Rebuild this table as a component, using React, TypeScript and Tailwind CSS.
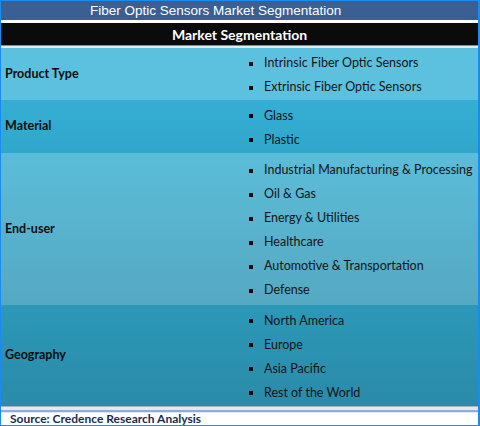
const segments = [
  {
    label: "Product Type",
    rowClass: "h-[52px] bg-[#5cc1de]",
    items: ["Intrinsic Fiber Optic Sensors", "Extrinsic Fiber Optic Sensors"],
  },
  {
    label: "Material",
    rowClass: "h-[53px] bg-gradient-to-b from-[#36aed3] to-[#30a6cb]",
    items: ["Glass", "Plastic"],
  },
  {
    label: "End-user",
    rowClass: "h-[152px] bg-gradient-to-b from-[#5bbdd9] to-[#55a8c2]",
    items: [
      "Industrial Manufacturing & Processing",
      "Oil & Gas",
      "Energy & Utilities",
      "Healthcare",
      "Automotive & Transportation",
      "Defense",
    ],
  },
  {
    label: "Geography",
    rowClass: "h-[101px] bg-gradient-to-b from-[#2c98b8] to-[#2a8ba8]",
    items: ["North America", "Europe", "Asia Pacific", "Rest of the World"],
  },
]

export default function App() {
  return (
    <div className="w-[480px] h-[426px] bg-white border-t border-l border-b border-r-2 border-[#1a8cf0] flex flex-col overflow-hidden">
      {/* Title bar */}
      <div className="h-[19px] shrink-0 bg-[#395f95] flex items-center pl-[89px] text-white text-[13.5px] leading-none font-['Liberation_Sans',Arial,sans-serif]">
        Fiber Optic Sensors Market Segmentation
      </div>
      <div className="h-[3px] shrink-0 bg-white" />

      {/* Header */}
      <div className="h-[22px] shrink-0 bg-[#0b0b0b] flex items-center justify-center text-white font-bold text-[14px] font-['Lato',sans-serif]">
        Market Segmentation
      </div>
      <div className="h-[1px] shrink-0 bg-[#8a8a8a]" />
      <div className="h-[2px] shrink-0 bg-[#d9eef5]" />

      {/* Rows */}
      {segments.map((seg) => (
        <div key={seg.label} className={`flex shrink-0 ${seg.rowClass}`}>
          <div className="w-[243px] shrink-0 flex items-center pl-[4px] font-bold text-[12.5px] text-[#0d0d0d] font-['Lato',sans-serif]">
            {seg.label}
          </div>
          <div className="flex-1 flex flex-col justify-center pt-[3px]">
            {seg.items.map((item) => (
              <div key={item} className="h-[24px] flex items-center text-[12.5px] text-[#141414] font-['Lato',sans-serif] whitespace-nowrap">
                <span className="w-[4px] h-[4px] shrink-0 bg-black ml-[5px] mr-[11px]" />
                {item}
              </div>
            ))}
          </div>
        </div>
      ))}

      {/* Footer lines */}
      <div className="h-[1px] shrink-0 bg-[#a9b4bd]" />
      <div className="h-[3px] shrink-0 bg-[#e3e9f2]" />
      <div className="h-[2px] shrink-0 bg-[#8daedb]" />
      <div className="h-[1px] shrink-0 bg-[#dbe6f4]" />
      <div className="h-[12px] shrink-0 flex items-center pl-[9px] font-bold text-[12px] leading-[12px] text-[#1a2c50] font-['Lato',sans-serif]">
        Source: Credence Research Analysis
      </div>
    </div>
  )
}
